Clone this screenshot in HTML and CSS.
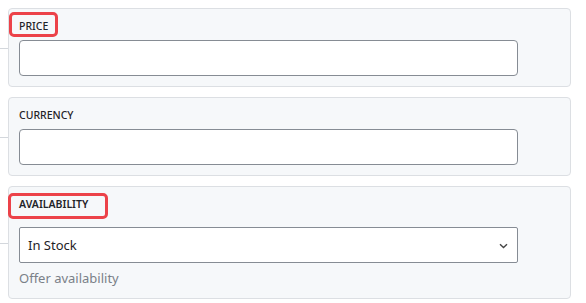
FILE: index.html
```html
<!DOCTYPE html>
<html>
<head>
<meta charset="utf-8">
<link rel="stylesheet" href="styles.css">
</head>
<body>
<div class="stack">
  <div class="card">
    <label class="label label--price">PRICE</label>
    <div class="input"></div>
  </div>
  <div class="card">
    <label class="label">CURRENCY</label>
    <div class="input"></div>
  </div>
  <div class="card">
    <label class="label label--avail">AVAILABILITY</label>
    <div class="input select">
      <span>In Stock</span>
      <svg class="chev" width="9" height="6" viewBox="0 0 9 6"><path d="M1 1.2 L4.5 4.5 L8 1.2" fill="none" stroke="#444" stroke-width="1.4"/></svg>
    </div>
    <div class="help">Offer availability</div>
  </div>
</div>
</body>
</html>
```
FILE: styles.css
```css
html, body {
  margin: 0;
  padding: 0;
  background: #ffffff;
}
body {
  font-family: "Noto Sans", "Open Sans", sans-serif;
  color: #1f2328;
}
.stack {
  display: flex;
  flex-direction: column;
  gap: 10px;
  padding: 8px 0 0 8px;
  width: 563px;
}
.card {
  position: relative;
  background: #f6f8fa;
  border: 1px solid #dcdfe3;
  border-radius: 4px;
  padding: 10px 10px 10px 10px;
}
.card::before {
  content: "";
  position: absolute;
  left: -9px;
  top: 50%;
  width: 8px;
  height: 1px;
  background: #d3d7dc;
}
.label {
  position: relative;
  display: block;
  width: max-content;
  font-size: 10.5px;
  line-height: 15px;
  font-weight: 500;
  margin-bottom: 6px;
  color: #1f2328;
}
.label--price::after,
.label--avail::after {
  content: "";
  position: absolute;
  border: 3px solid #ec4249;
  border-radius: 5px;
}
.label--price::after {
  left: -10px;
  right: -10px;
  top: -7px;
  bottom: -3px;
}
.label--avail {
  font-weight: 600;
  margin-bottom: 15px;
}
.label--avail::after {
  left: -11px;
  right: -20px;
  top: -4px;
  bottom: -7px;
}
.input {
  width: 497px;
  height: 34px;
  background: #ffffff;
  border: 1px solid #868c94;
  border-radius: 4px;
  box-sizing: content-box;
}
.select {
  display: flex;
  align-items: center;
  justify-content: space-between;
  border-radius: 2px;
  padding: 0;
  font-size: 13px;
  color: #1f2328;
}
.select span {
  padding-left: 8px;
}
.chev {
  margin-right: 9px;
  margin-top: 1px;
}
.help {
  font-size: 13px;
  line-height: 20px;
  margin-top: 5px;
  color: #7a8088;
}
```
